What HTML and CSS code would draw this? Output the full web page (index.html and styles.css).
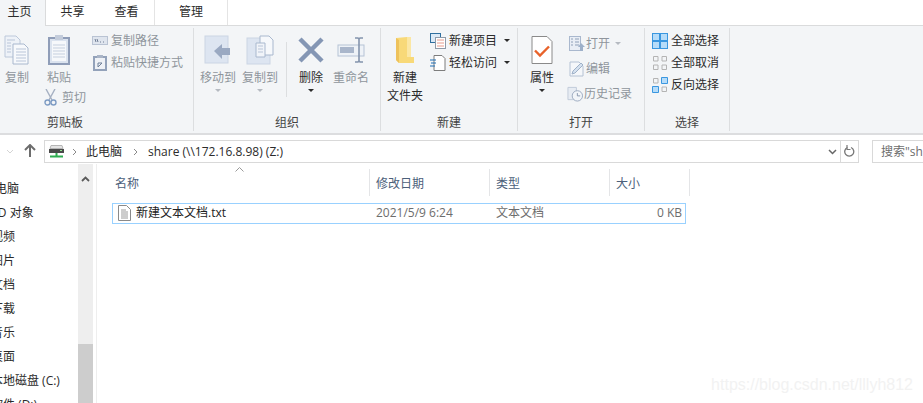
FILE: index.html
```html
<!DOCTYPE html>
<html lang="zh-CN">
<head>
  <meta charset="UTF-8">
  <title>share (Z:)</title>
  <link rel="stylesheet" href="styles.css">
</head>
<body>
  <div class="tabs">
    <div class="tab tab-home">主页</div>
    <div class="tab tab-share">共享</div>
    <div class="tab tab-view">查看</div>
    <div class="tab tab-manage">管理</div>
  </div>

  <div class="ribbon">
    <div class="group group-clip">
      <div class="group-body">
        <div class="big big-copy dim">
          <svg width="26" height="30" viewBox="0 0 26 30"><path d="M1 1h11l4 4v17H1z" fill="#eef2f8" stroke="#bcc8da"/><path d="M9 9h11l4 4v16H9z" fill="#f7f9fc" stroke="#a9b8ce"/><path d="M3 5h8M3 8h4M3 11h4M3 14h4M3 17h4M12 14h10M12 17h10M12 20h10M12 23h10M12 26h10" stroke="#b9c5d8"/></svg>
          <span>复制</span>
        </div>
        <div class="paste-col">
          <div class="big dim">
            <svg width="22" height="30" viewBox="0 0 22 30"><rect x="1" y="3" width="20" height="26" fill="#dbe3ef" stroke="#8f9db8" stroke-width="2"/><rect x="4" y="6" width="14" height="20" fill="#f6f8fb"/><rect x="7" y="0" width="8" height="5" fill="#c3ccdb"/><path d="M5 10h12M5 13h12M5 16h12M5 19h12M5 22h12" stroke="#c5cfde"/></svg>
            <span>粘贴</span>
          </div>
          <div class="small small-cut dim">
            <svg width="13" height="17" viewBox="0 0 13 17"><path d="M2 0l6 11M11 0L5 11" stroke="#a5b0c2" stroke-width="1.4" fill="none"/><circle cx="3.5" cy="13.5" r="2.5" fill="none" stroke="#7e9cc4" stroke-width="1.4"/><circle cx="9.5" cy="13.5" r="2.5" fill="none" stroke="#7e9cc4" stroke-width="1.4"/></svg>
            <span>剪切</span>
          </div>
        </div>
        <div class="small-col dim">
          <div class="small">
            <svg width="16" height="10" viewBox="0 0 16 10"><rect x=".5" y=".5" width="15" height="8" fill="#dfe5ee" stroke="#b9c3d3"/><path d="M3 3l1 3M5 3l1 3M8 6h1M11 6h1" stroke="#6f7d94"/></svg>
            <span>复制路径</span>
          </div>
          <div class="small">
            <svg width="14" height="16" viewBox="0 0 14 16"><rect x="1" y="2" width="12" height="13" fill="#eef1f6" stroke="#93a2ba" stroke-width="2"/><rect x="4" y="0" width="6" height="3" fill="#a9b4c6"/><path d="M5 12V8h4M5 12l4-4" stroke="#6f8099" fill="none"/></svg>
            <span>粘贴快捷方式</span>
          </div>
        </div>
      </div>
      <div class="group-label">剪贴板</div>
    </div>

    <div class="group group-org">
      <div class="group-body">
        <div class="big big-move dim">
          <svg width="28" height="30" viewBox="0 0 28 30"><rect x="1" y="1" width="23" height="27" fill="#dde5f1" stroke="#cbd5e4"/><path d="M10 16l8-7v4h8v7h-8v4z" fill="#9aa9c2"/></svg>
          <span>移动到</span>
          <i class="caret caret-dim"></i>
        </div>
        <div class="big big-copyto dim">
          <svg width="28" height="30" viewBox="0 0 28 30"><rect x="1" y="3" width="23" height="26" fill="#dde5f1" stroke="#cbd5e4"/><path d="M14 1h9l4 4v15H14z" fill="#f6f8fb" stroke="#a9b8ce"/><path d="M10 8h9v14h-9z" fill="#f1f4f9" stroke="#a9b8ce"/><path d="M12 11h5M12 14h5M12 17h5" stroke="#b9c5d8"/></svg>
          <span>复制到</span>
          <i class="caret caret-dim"></i>
        </div>
        <div class="vline"></div>
        <div class="big big-delete">
          <svg width="26" height="26" viewBox="0 0 26 26"><path d="M2 2l22 22M24 2L2 24" stroke="#8496b4" stroke-width="4.5"/></svg>
          <span>删除</span>
          <i class="caret"></i>
        </div>
        <div class="big big-rename dim">
          <svg width="28" height="26" viewBox="0 0 28 26"><rect x="1" y="8" width="26" height="11" fill="#eef2f7" stroke="#b6c3d6"/><rect x="3" y="10" width="14" height="6" fill="#a9b6cb"/><path d="M18 1h3l1 1 1-1h3M22 2v22M18 25h3l1-1 1 1h3" stroke="#8494ad" stroke-width="1.6" fill="none"/></svg>
          <span>重命名</span>
        </div>
      </div>
      <div class="group-label">组织</div>
    </div>

    <div class="group group-new">
      <div class="group-body">
        <div class="big big-folder">
          <svg width="20" height="28" viewBox="0 0 20 28"><path d="M1 2l11-1v20l7 0v6L4 27 1 24z" fill="#f8d978"/><path d="M1 2l3 2v23l-3-3z" fill="#eec25c"/><path d="M12 1h4v20h-4z" fill="#fbe7a4"/></svg>
          <span>新建<br>文件夹</span>
        </div>
        <div class="small-col">
          <div class="small">
            <svg width="16" height="16" viewBox="0 0 16 16"><rect x=".5" y=".5" width="10" height="9" fill="#dbe9f6" stroke="#2f6f9f"/><rect x="5.5" y="4.5" width="10" height="11" fill="#fff" stroke="#8e9aa8"/><path d="M7 7h7M7 10h7M7 13h7" stroke="#e79a8b"/></svg>
            <span>新建项目</span>
            <i class="caret"></i>
          </div>
          <div class="small">
            <svg width="16" height="16" viewBox="0 0 16 16"><path d="M4 .5h8l3 3v12H4z" fill="#fff" stroke="#7d7d7d"/><path d="M0 5h6M1 8h5M0 11h5" stroke="#1f6fb5"/></svg>
            <span>轻松访问</span>
            <i class="caret"></i>
          </div>
        </div>
      </div>
      <div class="group-label">新建</div>
    </div>

    <div class="group group-open">
      <div class="group-body">
        <div class="big big-props">
          <svg width="22" height="29" viewBox="0 0 22 29"><path d="M1 1h15l5 5v22H1z" fill="#fff" stroke="#8a8a8a"/><path d="M4 15l5 5 9-9" fill="none" stroke="#e8622a" stroke-width="2.4"/></svg>
          <span>属性</span>
          <i class="caret"></i>
        </div>
        <div class="small-col small-col-open dim">
          <div class="small">
            <svg width="16" height="16" viewBox="0 0 16 16"><rect x=".5" y=".5" width="11" height="14" fill="#e9eef5" stroke="#a9b8ce"/><path d="M2 3h2M2 6h2M2 9h2M6 3h4M6 6h4M6 9h4" stroke="#8fa0b8"/><path d="M12 7l4 4h-2v4h-3v-4H9z" fill="#9db0c9"/></svg>
            <span>打开</span>
            <i class="caret caret-dim"></i>
          </div>
          <div class="small">
            <svg width="16" height="16" viewBox="0 0 16 16"><path d="M1 1h9l4 4v10H1z" fill="#f5f7fa" stroke="#b5c2d4"/><path d="M3 13l1-3 8-8 2 2-8 8z" fill="#d5e1ef" stroke="#9fb1c8"/></svg>
            <span>编辑</span>
          </div>
          <div class="small small-history">
            <svg width="17" height="16" viewBox="0 0 17 16"><path d="M1 1h9v13H1z" fill="#e7ecf3" stroke="#c0cad9"/><circle cx="11" cy="10" r="5.5" fill="#f2f5f9" stroke="#9aa9bf"/><path d="M11 7v3h3" stroke="#8696ae" fill="none"/></svg>
            <span>历史记录</span>
          </div>
        </div>
      </div>
      <div class="group-label">打开</div>
    </div>

    <div class="group group-select">
      <div class="group-body">
        <div class="small-col">
          <div class="small">
            <svg width="16" height="16" viewBox="0 0 16 16"><rect x=".5" y=".5" width="15" height="15" fill="#b6dcf9" stroke="#3a97e0"/><path d="M8 0v16M0 8h16" stroke="#3a97e0" stroke-width="2"/></svg>
            <span>全部选择</span>
          </div>
          <div class="small">
            <svg width="16" height="16" viewBox="0 0 16 16"><path d="M1.500 1.500h4.500v4.500h-4.500zM10 1.500h4.500v4.500h-4.500zM1.500 10h4.500v4.500h-4.500zM10 10h4.500v4.500h-4.500z" fill="none" stroke="#b4b4b4"/></svg>
            <span>全部取消</span>
          </div>
          <div class="small">
            <svg width="16" height="16" viewBox="0 0 16 16"><path d="M1.500 1.500h4.500v4.500h-4.500zM10 10h4.500v4.500h-4.500z" fill="none" stroke="#b4b4b4"/><path d="M9.500.5h6v6h-6zM.5 9.500h6v6h-6z" fill="#b6dcf9" stroke="#3a97e0"/></svg>
            <span>反向选择</span>
          </div>
        </div>
      </div>
      <div class="group-label">选择</div>
    </div>
  </div>

  <div class="addressbar">
    <svg class="nav-back" width="8" height="5" viewBox="0 0 8 5"><path d="M1 1l3 3 3-3" fill="none" stroke="#d4d4d4"/></svg>
    <svg class="nav-up" width="12" height="13" viewBox="0 0 12 13"><path d="M6 1v12M1 6l5-5 5 5" fill="none" stroke="#6d6d6d" stroke-width="2"/></svg>
    <div class="address">
      <svg class="drive" width="15" height="13" viewBox="0 0 15 13"><path d="M2 .5h11l1 3H1z" fill="#e4e4e4" stroke="#b5b5b5"/><rect x="0" y="4" width="15" height="4" fill="#4a4a4a"/><rect x="11" y="5" width="2" height="1" fill="#8ee08e"/><path d="M7.500 8v3M1 11.500h13" stroke="#2fae52" stroke-width="2"/></svg>
      <svg class="crumb-sep" width="5" height="8" viewBox="0 0 5 8"><path d="M1 1l3 3-3 3" fill="none" stroke="#8a8a8a"/></svg>
      <span class="crumb">此电脑</span>
      <svg class="crumb-sep crumb-sep2" width="5" height="8" viewBox="0 0 5 8"><path d="M1 1l3 3-3 3" fill="none" stroke="#8a8a8a"/></svg>
      <span class="crumb">share (\\172.16.8.98) (Z:)</span>
      <svg class="addr-drop" width="9" height="6" viewBox="0 0 9 6"><path d="M1 1l3.500 3.500L8 1" fill="none" stroke="#666" stroke-width="1.500"/></svg>
      <div class="refresh">
        <svg width="11" height="13" viewBox="0 0 11 13"><path d="M7 2.500a4.500 4.500 0 1 1-3.500 0" fill="none" stroke="#777" stroke-width="1.300"/><path d="M3 0v4.500h3.500" fill="none" stroke="#777" stroke-width="1.200"/></svg>
      </div>
    </div>
    <div class="search">搜索"sh</div>
  </div>

  <div class="main">
    <div class="nav">
      <div class="nav-item nav-pc">此电脑</div>
      <div class="nav-item">3D 对象</div>
      <div class="nav-item">视频</div>
      <div class="nav-item">图片</div>
      <div class="nav-item">文档</div>
      <div class="nav-item">下载</div>
      <div class="nav-item">音乐</div>
      <div class="nav-item">桌面</div>
      <div class="nav-item">本地磁盘 (C:)</div>
      <div class="nav-item">软件 (D:)</div>
    </div>
    <div class="scrollbar">
      <svg class="scroll-up" width="9" height="6" viewBox="0 0 9 6"><path d="M1 5l3.500-3.500L8 5" fill="none" stroke="#5a5a5a" stroke-width="1.800"/></svg>
      <div class="scroll-thumb"></div>
    </div>
    <div class="files">
      <svg class="sort-up" width="9" height="5" viewBox="0 0 9 5"><path d="M.5 4.500l4-4 4 4" fill="none" stroke="#9a9a9a"/></svg>
      <div class="headers">
        <div class="col col-name">名称</div>
        <div class="col col-date">修改日期</div>
        <div class="col col-type">类型</div>
        <div class="col col-size">大小</div>
      </div>
      <div class="file-row">
        <div class="cell-name">
          <svg width="13" height="16" viewBox="0 0 13 16"><path d="M.5.500h8l4 4v11H.5z" fill="#fff" stroke="#8a8a8a"/><path d="M3 5h5M3 7h7M3 9h7M3 11h7M3 13h7" stroke="#9a9a9a"/></svg>
          <span>新建文本文档.txt</span>
        </div>
        <div class="cell-date">2021/5/9 6:24</div>
        <div class="cell-type">文本文档</div>
        <div class="cell-size">0 KB</div>
      </div>
      <div class="watermark">https://blog.csdn.net/lllyh812</div>
    </div>
  </div>
</body>
</html>
```

FILE: styles.css
```css
html, body {
  margin: 0;
  padding: 0;
  height: 403px;
  overflow: hidden;
  background: white;
}
body {
  font-family: "Open Sans", "Noto Sans CJK SC", sans-serif;
  font-size: 12px;
  line-height: 16px;
  color: #2b2b2b;
}
svg {
  display: block;
  flex: none;
}

/* tabs */
.tabs {
  display: flex;
  height: 25px;
  border-bottom: 1px solid #dadbdc;
}
.tab {
  height: 25px;
  line-height: 24px;
  text-align: center;
  box-sizing: border-box;
}
.tab-home {
  width: 46px;
  height: 26px;
  padding-right: 6px;
  background: #f3f5f7;
  border-right: 1px solid #dadbdc;
}
.tab-share { width: 53px; }
.tab-view { width: 56px; border-right: 1px solid #e4e4e4; }
.tab-manage { width: 73px; border-right: 1px solid #e4e4e4; }

/* ribbon */
.ribbon {
  display: flex;
  height: 107px;
  background: #f3f5f7;
  border-bottom: 2px solid #dcdddf;
}
.group {
  display: flex;
  flex-direction: column;
  margin-top: 2px;
  height: 103px;
  border-right: 1px solid #dcdee0;
  box-sizing: border-box;
}
.group-clip { width: 194px; }
.group-org { width: 187px; }
.group-new { width: 137px; }
.group-open { width: 127px; }
.group-select { width: 85px; }
.group-body {
  display: flex;
  flex: 1;
  min-height: 0;
}
.group-label {
  height: 17px;
  line-height: 18px;
  text-align: center;
  color: #444;
}
.group-clip .group-label { width: 130px; }
.dim {
  color: #8f959c;
}

.big {
  display: flex;
  flex-direction: column;
  align-items: center;
  width: 36px;
  padding-top: 7px;
  flex: none;
}
.big svg {
  height: 30px;
  margin-bottom: 4px;
}
.big span {
  text-align: center;
  line-height: 18px;
}
.big-copy { width: 34px; }
.paste-col {
  width: 58px;
  flex: none;
  padding-left: 8px;
  box-sizing: border-box;
}
.paste-col .big { width: 34px; }
.big-move { margin-left: 6px; }
.big-copyto { margin-left: 6px; }
.big-delete { margin-left: 5px; width: 38px; }
.big-rename { margin-left: 1px; width: 40px; }
.big-folder { width: 48px; }
.big-props { width: 48px; }

.vline {
  width: 1px;
  height: 55px;
  margin: 14px 0 0 8px;
  background: #dcdee0;
  flex: none;
}

.caret {
  display: block;
  width: 0;
  height: 0;
  margin-top: 2px;
  border-left: 3px solid transparent;
  border-right: 3px solid transparent;
  border-top: 3px solid #2b2b2b;
  flex: none;
}
.caret-dim { border-top-color: #b5bac1; }

.small-col {
  display: flex;
  flex-direction: column;
  gap: 5px;
  padding-top: 4px;
}
.small {
  display: flex;
  align-items: center;
  gap: 3px;
  height: 17px;
  white-space: nowrap;
}
.small svg { width: 16px; }
.small .caret { margin: 0 0 0 4px; }

.small-cut {
  margin: 2px 0 0 2px;
  gap: 5px;
}
.small-cut svg { width: 13px; }
.group-new .small-col { margin-left: 1px; }
.small-col-open {
  gap: 8px;
  padding-top: 7px;
  margin-left: 3px;
}
.small-col-open .small { gap: 1px; }
.small-history { margin-left: -2px; }
.group-select .small-col { margin-left: 7px; }

/* address bar */
.addressbar {
  display: flex;
  align-items: flex-start;
  height: 29px;
  padding-top: 5px;
  box-sizing: border-box;
}
.nav-back { margin: 9px 0 0 6px; }
.nav-up { margin: 4px 0 0 10px; }
.address {
  display: flex;
  align-items: center;
  width: 815px;
  height: 23px;
  margin-left: 8px;
  border: 1px solid #d9d9d9;
  box-sizing: border-box;
  flex: none;
}
.drive { margin-left: 4px; }
.crumb-sep { margin: 0 9px 0 8px; }
.crumb-sep2 { margin: 0 10px 0 11px; }
.crumb { white-space: nowrap; }
.addr-drop { margin-left: auto; margin-right: 3px; }
.refresh {
  display: flex;
  align-items: center;
  justify-content: center;
  width: 17px;
  height: 21px;
  border-left: 1px solid #d9d9d9;
}
.search {
  width: 60px;
  height: 23px;
  margin-left: 13px;
  padding-left: 8px;
  line-height: 21px;
  border: 1px solid #d9d9d9;
  border-right: none;
  box-sizing: border-box;
  color: #6d6d6d;
  flex: none;
  white-space: nowrap;
  overflow: hidden;
}

/* main */
.main {
  display: flex;
  height: 240px;
}
.nav {
  width: 78px;
  overflow: hidden;
  flex: none;
  padding-top: 13px;
  box-sizing: border-box;
}
.nav-item {
  height: 24px;
  line-height: 24px;
  margin-left: -9px;
  white-space: nowrap;
}
.nav-pc { margin-left: -17px; }
.scrollbar {
  display: flex;
  flex-direction: column;
  width: 15px;
  background: #eeeeee;
  flex: none;
}
.scroll-up { margin: 12px 0 0 3px; }
.scroll-thumb {
  width: 15px;
  height: 60px;
  margin-top: auto;
  background: #cdcdcd;
}
.files {
  position: relative;
  flex: 1;
  margin-left: 3px;
  padding: 5px 0 0 16px;
  border-left: 1px solid #eeeeee;
}
.sort-up {
  position: absolute;
  left: 138px;
  top: 3px;
}
.headers {
  display: flex;
  height: 27px;
  line-height: 29px;
  color: #4c607a;
}
.col {
  box-sizing: border-box;
  border-right: 1px solid #e4e5e7;
  padding-left: 6px;
}
.col-name { width: 257px; padding-left: 2px; }
.col-date { width: 120px; }
.col-type { width: 120px; }
.col-size { width: 80px; }

.file-row {
  display: flex;
  align-items: center;
  width: 574px;
  height: 21px;
  margin: 7px 0 0 -1px;
  padding-bottom: 1px;
  border: 1px solid #99d1ff;
  box-sizing: border-box;
  color: #6d6d6d;
}
.cell-name {
  display: flex;
  align-items: center;
  gap: 5px;
  width: 257px;
  padding-left: 5px;
  box-sizing: border-box;
  color: #222;
}
.cell-date { width: 120px; padding-left: 6px; box-sizing: border-box; }
.cell-type { width: 120px; padding-left: 6px; box-sizing: border-box; }
.cell-size { flex: 1; text-align: right; padding-right: 3px; }

.watermark {
  position: absolute;
  right: 10px;
  bottom: 10px;
  font-family: "Liberation Sans", Arial, sans-serif;
  font-size: 16px;
  line-height: 18px;
  color: #f2f2f2;
}
```
